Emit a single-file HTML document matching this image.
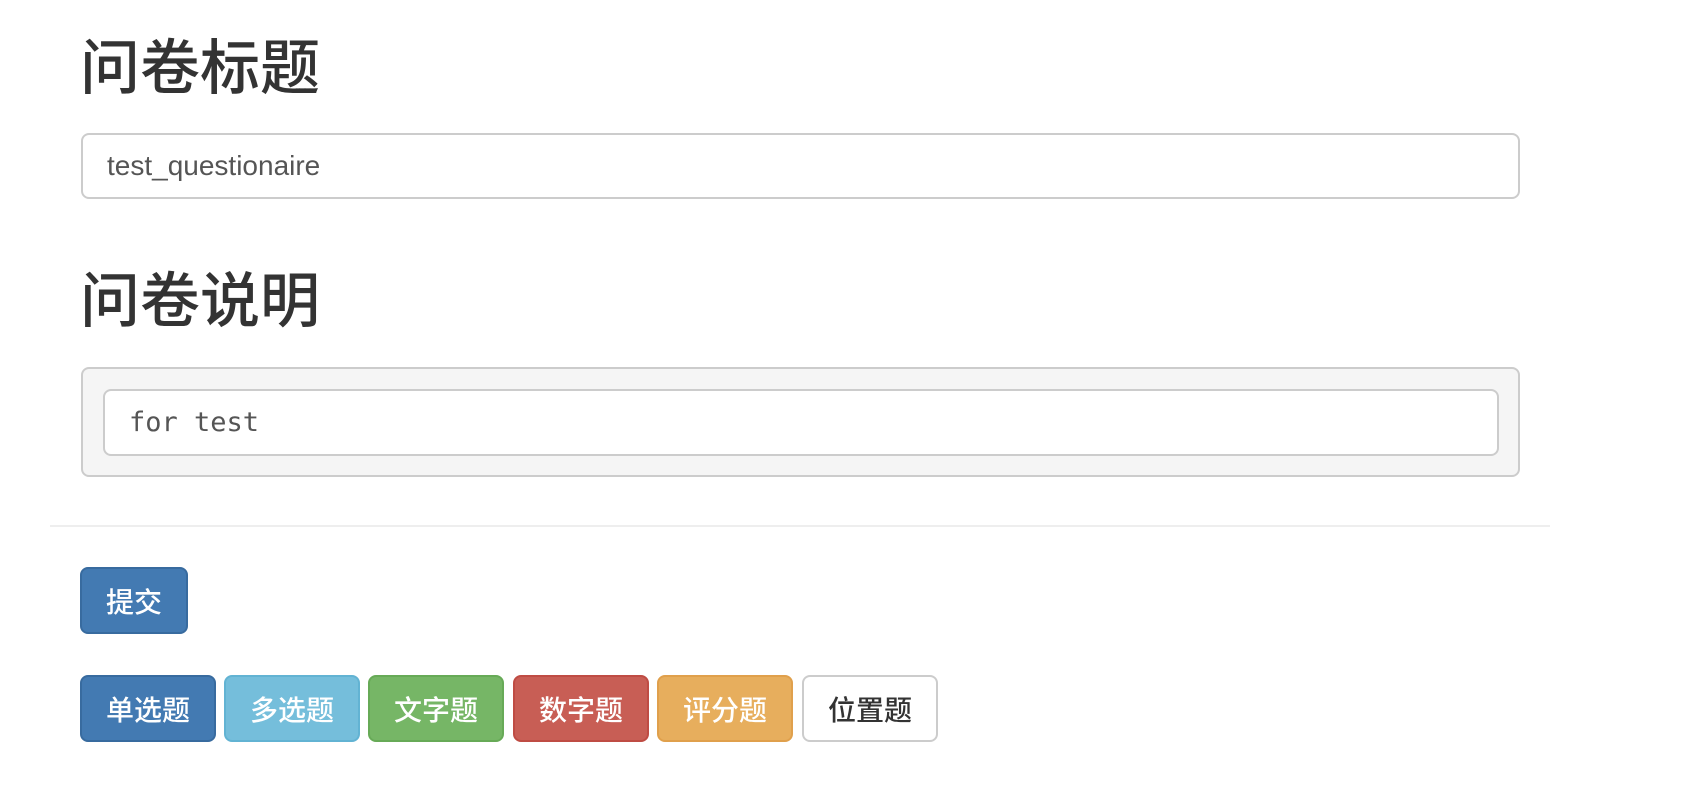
<!DOCTYPE html>
<html><head><meta charset="utf-8"><style>
body{margin:0;width:1696px;height:788px;background:#fff;position:relative;font-family:"Liberation Sans","Noto Sans CJK SC",sans-serif;color:#333;overflow:hidden}
.h{position:absolute;left:80px;font-size:60px;font-weight:500;line-height:72px;margin:0}
.inp{position:absolute;box-sizing:border-box;border:2px solid #ccc;border-radius:8px;background:#fff;color:#555;font-size:28px;display:flex;align-items:center}
.well{position:absolute;left:81px;top:367px;width:1439px;height:110px;box-sizing:border-box;background:#f5f5f5;border:2px solid #ccc;border-radius:8px}
hr{position:absolute;left:50px;top:525px;width:1500px;margin:0;border:0;border-top:2px solid #eee}
.b{position:absolute;box-sizing:border-box;height:67px;border:2px solid;border-radius:8px;color:#fff;font-size:28px;font-weight:500;display:flex;align-items:center;justify-content:center}
</style></head><body>
<div class="h" style="top:33px">问卷标题</div>
<div class="inp" style="left:81px;top:133px;width:1439px;height:66px;padding-left:24px">test_questionaire</div>
<div class="h" style="top:266px">问卷说明</div>
<div class="well"></div>
<div class="inp" style="left:103px;top:389px;width:1396px;height:67px;padding-left:24px;font-family:'DejaVu Sans Mono','Liberation Mono',monospace;font-size:27px">for test</div>
<hr>
<div class="b" style="left:80px;top:567px;width:108px;background:#437ab2;border-color:#386b9f">提交</div>
<div class="b" style="left:80px;top:675px;width:136px;background:#437ab2;border-color:#386b9f">单选题</div>
<div class="b" style="left:224px;top:675px;width:136px;background:#75bedb;border-color:#62b3d3">多选题</div>
<div class="b" style="left:368px;top:675px;width:136px;background:#76b666;border-color:#67aa57">文字题</div>
<div class="b" style="left:513px;top:675px;width:136px;background:#c85e55;border-color:#bf4c44">数字题</div>
<div class="b" style="left:657px;top:675px;width:136px;background:#e7ae5d;border-color:#e0a04c">评分题</div>
<div class="b" style="left:802px;top:675px;width:136px;background:#fff;border-color:#ccc;color:#333">位置题</div>
</body></html>
